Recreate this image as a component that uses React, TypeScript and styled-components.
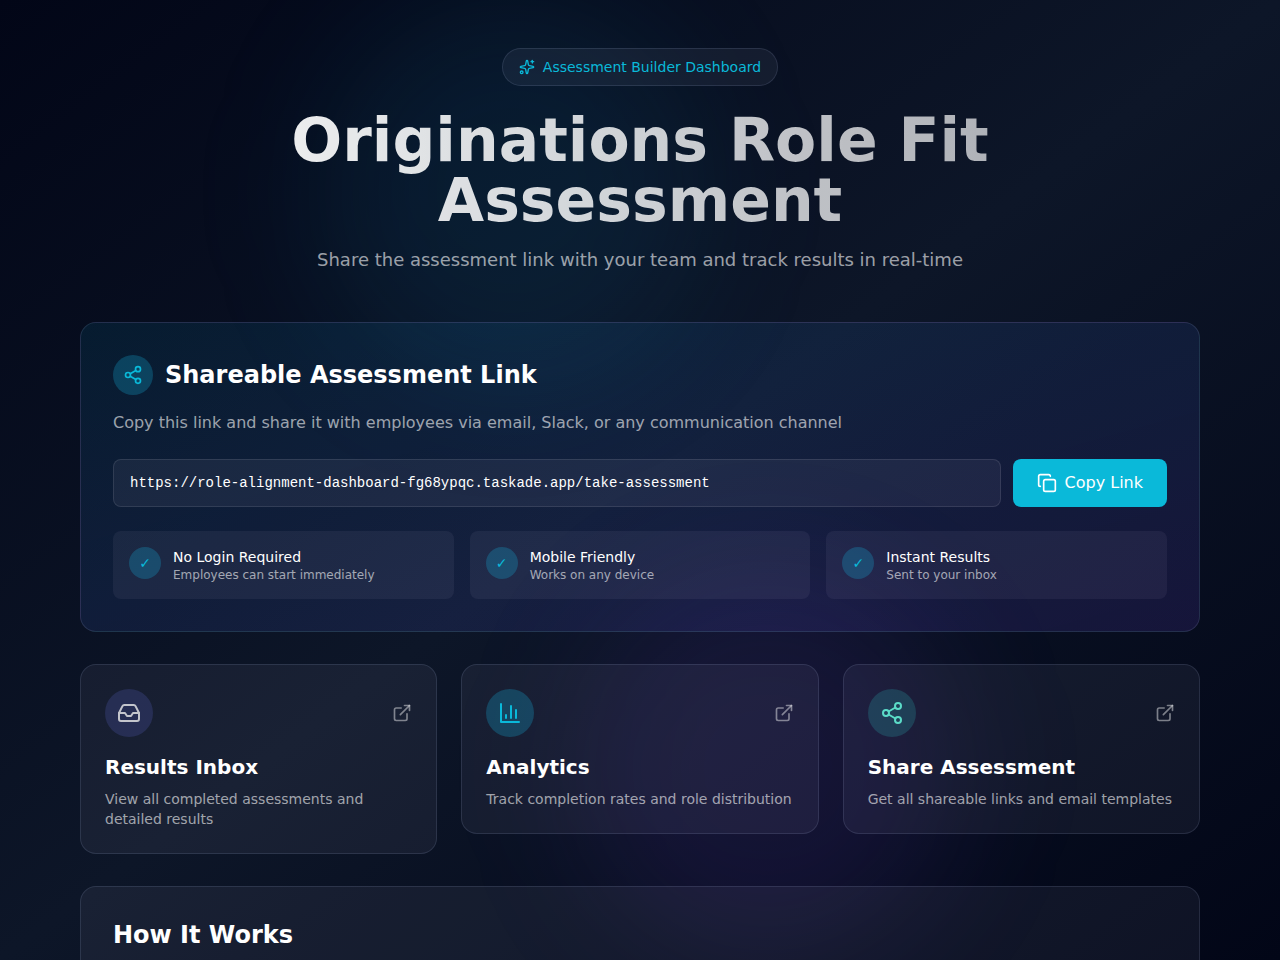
import React from "react";
import styled, { createGlobalStyle } from "styled-components";
import { Copy, ExternalLink, Inbox, Share2, Sparkles } from "lucide-react";

const GlobalStyle = createGlobalStyle`
  *, *::before, *::after { box-sizing: border-box; }
  body {
    margin: 0;
    background: #020617;
    color: #fff;
    font-family: "DejaVu Sans", sans-serif;
    font-size: 16px;
    line-height: 24px;
  }
  h1, h2, h3, p { margin: 0; }
  svg { display: block; flex-shrink: 0; }
`;

const Page = styled.div`
  position: relative;
  height: 100vh;
  overflow: hidden;
  background: linear-gradient(to bottom right, #020617, #0d1628, #020617);
`;

const Glow = styled.div<{ $tone: "cyan" | "purple" }>`
  position: absolute;
  width: 384px;
  height: 384px;
  border-radius: 50%;
  filter: blur(64px);
  pointer-events: none;
  ${({ $tone }) =>
    $tone === "cyan"
      ? "top: 0; left: 25%; background: rgba(6, 150, 200, 0.1);"
      : "bottom: 0; right: 25%; background: rgba(124, 70, 237, 0.1);"}
`;

const Content = styled.main`
  position: relative;
  display: flex;
  flex-direction: column;
  gap: 32px;
  padding: 48px 80px;
`;

const Hero = styled.header`
  display: flex;
  flex-direction: column;
  align-items: center;
  text-align: center;
  margin-bottom: 16px;
`;

const Badge = styled.div`
  display: flex;
  align-items: center;
  gap: 8px;
  padding: 8px 16px;
  margin-bottom: 24px;
  border: 1px solid rgba(200, 210, 255, 0.12);
  border-radius: 999px;
  background: rgba(220, 225, 255, 0.06);
  color: #0ab9d9;
  font-size: 14px;
  line-height: 20px;
`;

const Title = styled.h1`
  width: 100%;
  margin-bottom: 16px;
  font-size: 60px;
  line-height: 60px;
  font-weight: 700;
  color: transparent;
  background: linear-gradient(to right, #fff, rgba(255, 255, 255, 0.6));
  background-clip: text;
  -webkit-background-clip: text;
`;

const Subtitle = styled.p`
  font-size: 18px;
  line-height: 28px;
  color: rgba(255, 255, 255, 0.6);
`;

const Panel = styled.section<{ $tinted?: boolean }>`
  padding: 32px;
  border: 1px solid rgba(200, 210, 255, 0.12);
  border-radius: 16px;
  background: ${({ $tinted }) =>
    $tinted
      ? "linear-gradient(to bottom right, rgba(6, 165, 212, 0.1), rgba(124, 80, 247, 0.13))"
      : "rgba(220, 225, 255, 0.06)"};
`;

const PanelHeader = styled.div`
  display: flex;
  align-items: center;
  gap: 12px;
  margin-bottom: 16px;
`;

const Heading = styled.h2`
  font-size: 24px;
  line-height: 32px;
  font-weight: 700;
`;

const Lead = styled.p`
  margin-bottom: 24px;
  color: rgba(255, 255, 255, 0.6);
`;

const tones = {
  cyan: { fill: "rgba(22, 170, 212, 0.28)", ink: "#0ab9d9" },
  violet: { fill: "rgba(99, 110, 220, 0.2)", ink: "#c3c5cc" },
  teal: { fill: "rgba(45, 200, 200, 0.2)", ink: "#5bdcc8" },
};
type Tone = keyof typeof tones;

const Disc = styled.div<{ $size: number; $tone: Tone }>`
  display: flex;
  flex-shrink: 0;
  align-items: center;
  justify-content: center;
  width: ${({ $size }) => $size}px;
  height: ${({ $size }) => $size}px;
  border-radius: 50%;
  background: ${({ $tone }) => tones[$tone].fill};
  color: ${({ $tone }) => tones[$tone].ink};
  font-size: 14px;
  line-height: 20px;
`;

const LinkRow = styled.div`
  display: flex;
  gap: 12px;
  margin-bottom: 24px;
`;

const LinkField = styled.div`
  flex: 1;
  height: 48px;
  padding: 0 16px;
  border: 1px solid rgba(255, 255, 255, 0.1);
  border-radius: 8px;
  background: rgba(235, 225, 255, 0.06);
  font-family: "Liberation Mono", monospace;
  font-size: 14px;
  line-height: 46px;
`;

const CopyButton = styled.button`
  display: flex;
  align-items: center;
  gap: 8px;
  height: 48px;
  padding: 0 24px;
  border: 0;
  border-radius: 8px;
  background: #0ab9d9;
  color: #fff;
  font: inherit;
  cursor: pointer;
`;

const Features = styled.div`
  display: grid;
  grid-template-columns: repeat(3, 1fr);
  gap: 16px;
`;

const FeatureItem = styled.div`
  display: flex;
  align-items: flex-start;
  gap: 12px;
  padding: 16px;
  border-radius: 8px;
  background: rgba(235, 225, 255, 0.06);
`;

const FeatureName = styled.p`
  font-size: 14px;
  line-height: 20px;
`;

const FeatureNote = styled.p`
  font-size: 12px;
  line-height: 16px;
  color: rgba(255, 255, 255, 0.6);
`;

const Cards = styled.div`
  display: grid;
  grid-template-columns: repeat(3, 1fr);
  align-items: start;
  gap: 24px;
`;

const Card = styled.article`
  padding: 24px;
  border: 1px solid rgba(200, 210, 255, 0.12);
  border-radius: 16px;
  background: rgba(220, 225, 255, 0.06);
`;

const CardTop = styled.div`
  display: flex;
  align-items: center;
  justify-content: space-between;
  margin-bottom: 16px;
  color: rgba(255, 255, 255, 0.45);
`;

const CardTitle = styled.h3`
  margin-bottom: 8px;
  font-size: 20px;
  line-height: 28px;
  font-weight: 700;
`;

const CardText = styled.p`
  font-size: 14px;
  line-height: 20px;
  color: rgba(255, 255, 255, 0.6);
`;

const ChartIcon = () => (
  <svg
    width="24"
    height="24"
    viewBox="0 0 24 24"
    fill="none"
    stroke="currentColor"
    strokeWidth="2"
    strokeLinecap="round"
    strokeLinejoin="round"
  >
    <path d="M3 3v18h18M18 17V9M13 17V5M8 17v-3" />
  </svg>
);

const features = [
  { name: "No Login Required", note: "Employees can start immediately" },
  { name: "Mobile Friendly", note: "Works on any device" },
  { name: "Instant Results", note: "Sent to your inbox" },
];

const cards: { title: string; text: string; tone: Tone; icon: React.ReactNode }[] = [
  {
    title: "Results Inbox",
    text: "View all completed assessments and detailed results",
    tone: "violet",
    icon: <Inbox size={24} />,
  },
  {
    title: "Analytics",
    text: "Track completion rates and role distribution",
    tone: "cyan",
    icon: <ChartIcon />,
  },
  {
    title: "Share Assessment",
    text: "Get all shareable links and email templates",
    tone: "teal",
    icon: <Share2 size={24} />,
  },
];

export default function App() {
  return (
    <Page>
      <GlobalStyle />
      <Glow $tone="cyan" />
      <Glow $tone="purple" />
      <Content>
        <Hero>
          <Badge>
            <Sparkles size={16} />
            <span>Assessment Builder Dashboard</span>
          </Badge>
          <Title>Originations Role Fit Assessment</Title>
          <Subtitle>Share the assessment link with your team and track results in real-time</Subtitle>
        </Hero>

        <Panel $tinted>
          <PanelHeader>
            <Disc $size={40} $tone="cyan">
              <Share2 size={20} />
            </Disc>
            <Heading>Shareable Assessment Link</Heading>
          </PanelHeader>
          <Lead>Copy this link and share it with employees via email, Slack, or any communication channel</Lead>
          <LinkRow>
            <LinkField>https://role-alignment-dashboard-fg68ypqc.taskade.app/take-assessment</LinkField>
            <CopyButton type="button">
              <Copy size={20} />
              Copy Link
            </CopyButton>
          </LinkRow>
          <Features>
            {features.map(({ name, note }) => (
              <FeatureItem key={name}>
                <Disc $size={32} $tone="cyan">✓</Disc>
                <div>
                  <FeatureName>{name}</FeatureName>
                  <FeatureNote>{note}</FeatureNote>
                </div>
              </FeatureItem>
            ))}
          </Features>
        </Panel>

        <Cards>
          {cards.map(({ title, text, tone, icon }) => (
            <Card key={title}>
              <CardTop>
                <Disc $size={48} $tone={tone}>{icon}</Disc>
                <ExternalLink size={20} />
              </CardTop>
              <CardTitle>{title}</CardTitle>
              <CardText>{text}</CardText>
            </Card>
          ))}
        </Cards>

        <Panel>
          <Heading>How It Works</Heading>
        </Panel>
      </Content>
    </Page>
  );
}
